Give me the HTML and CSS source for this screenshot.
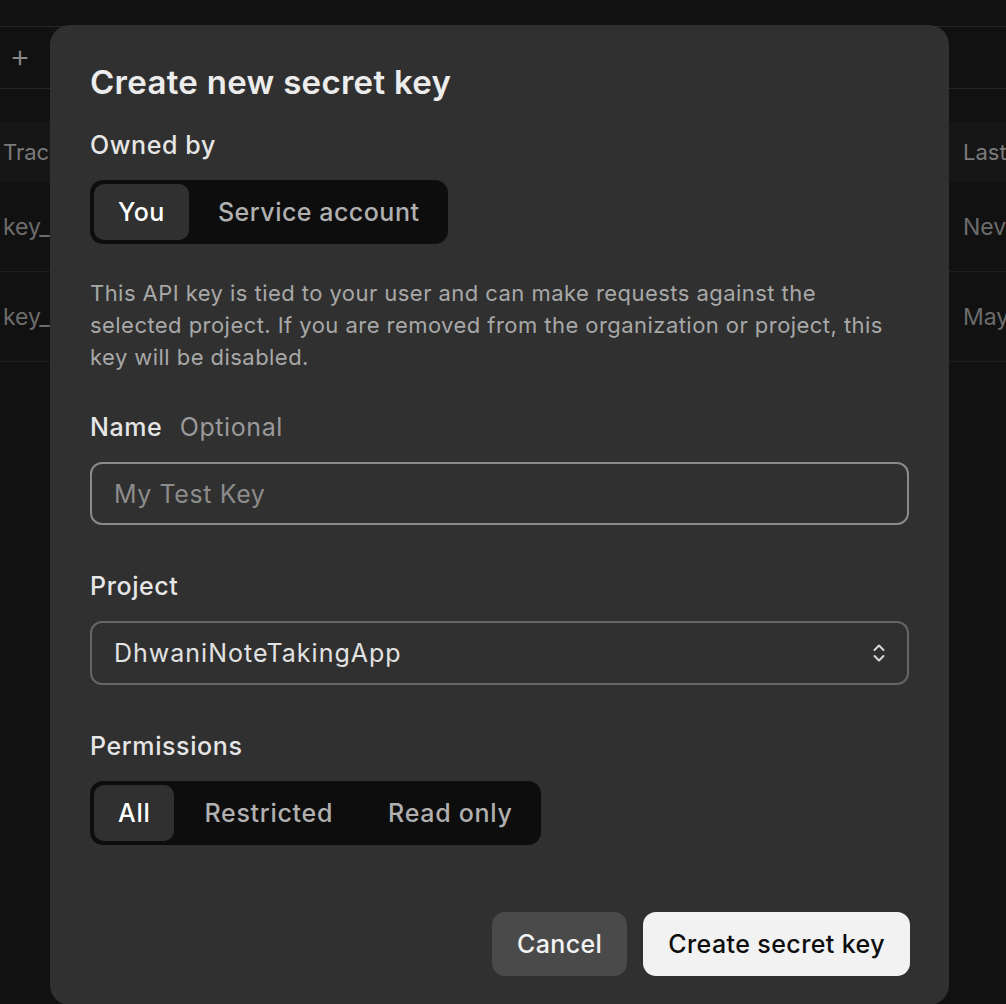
FILE: index.html
```html
<!DOCTYPE html>
<html>
<head>
<meta charset="utf-8">
<link rel="stylesheet" href="styles.css">
</head>
<body>
<div class="page">
  <div class="toolbar">
    <div class="add-btn">+</div>
  </div>
  <div class="table">
    <div class="trow thead"><span class="c1">Tracking</span><span class="c2">Last</span></div>
    <div class="trow"><span class="c1">key_abc</span><span class="c2">Nev</span></div>
    <div class="trow"><span class="c1">key_def</span><span class="c2">May</span></div>
  </div>
</div>
<div class="modal">
  <h1 class="title">Create new secret key</h1>
  <div class="label label-owned">Owned by</div>
  <div class="seg seg-owner">
    <div class="seg-item active">You</div>
    <div class="seg-item">Service account</div>
  </div>
  <p class="desc">This API key is tied to your user and can make requests against the selected project. If you are removed from the organization or project, this key will be disabled.</p>
  <div class="label label-name">Name <span class="optional">Optional</span></div>
  <div class="input placeholder">My Test Key</div>
  <div class="label label-project">Project</div>
  <div class="input select">
    <span>DhwaniNoteTakingApp</span>
    <svg class="chev" width="16" height="24" viewBox="0 0 16 24" fill="none" stroke="#d8d8d8" stroke-width="2" stroke-linecap="round" stroke-linejoin="round"><path d="M3.5 9 L8 4.5 L12.5 9"/><path d="M3.5 15 L8 19.5 L12.5 15"/></svg>
  </div>
  <div class="label label-perm">Permissions</div>
  <div class="seg seg-perm">
    <div class="seg-item active">All</div>
    <div class="seg-item">Restricted</div>
    <div class="seg-item">Read only</div>
  </div>
  <div class="actions">
    <button class="btn btn-cancel">Cancel</button>
    <button class="btn btn-primary">Create secret key</button>
  </div>
</div>
</body>
</html>
```
FILE: styles.css
```css
* { box-sizing: border-box; }
html, body { margin: 0; padding: 0; }
body {
  width: 1006px;
  height: 1004px;
  overflow: hidden;
  background: #111111;
  font-family: Inter, "Noto Sans", sans-serif;
  position: relative;
}
.page { padding-top: 26px; }
.toolbar {
  height: 63px;
  border-top: 1px solid #262626;
  border-bottom: 1px solid #262626;
  display: flex;
  align-items: center;
}
.add-btn {
  color: #8a8a8a;
  font-size: 32px;
  font-weight: 300;
  width: 40px;
  text-align: center;
  line-height: 1;
  margin-top: -4px;
}
.table { margin-top: 33px; }
.trow {
  height: 90px;
  display: flex;
  justify-content: space-between;
  align-items: center;
  border-bottom: 1px solid #1e1e1e;
  color: #6c6c6c;
  font-size: 23px;
  padding: 0 0 0 3px;
}
.trow.thead {
  height: 60px;
  background: #161616;
  border-bottom: none;
  color: #7a7a7a;
  font-size: 22px;
}
.c2 { width: 43px; white-space: nowrap; overflow: hidden; }

.modal {
  position: absolute;
  left: 50px;
  top: 25px;
  width: 899px;
  height: 980px;
  background: #303030;
  border-radius: 20px;
  padding: 34px 40px 0 40px;
  color: #ececec;
}
.title {
  margin: 0;
  font-size: 33px;
  font-weight: 600;
  line-height: 46px;
  color: #ececec;
  letter-spacing: 0.3px;
}
.label {
  font-size: 25px;
  font-weight: 500;
  line-height: 32px;
  color: #e6e6e6;
  letter-spacing: 0.6px;
}
.label-owned { margin-top: 24px; }
.seg {
  display: inline-flex;
  gap: 4px;
  background: #0d0d0d;
  border-radius: 13px;
  padding: 4px;
  height: 64px;
}
.seg-owner { margin-top: 19px; }
.seg-item {
  display: flex;
  align-items: center;
  padding: 0 25px;
  border-radius: 10px;
  font-size: 25px;
  font-weight: 500;
  color: #b0b0b0;
  letter-spacing: 0.5px;
}
.seg-owner .seg-item.active { padding: 0 24px; }
.seg-item.active {
  background: #303030;
  color: #ffffff;
}
.seg-perm .seg-item { letter-spacing: 0.7px; padding: 0 25px 0 26px; }
.seg-perm .seg-item.active { padding: 0 24px; }
.desc {
  margin: 33px 0 0 0;
  font-size: 22px;
  line-height: 32px;
  color: #a8a8a8;
  letter-spacing: 0.45px;
}
.label-name { margin-top: 38px; }
.optional { color: #9a9a9a; font-weight: 400; margin-left: 10px; }
.input {
  margin-top: 19px;
  height: 63px;
  border: 2px solid #8a8a8a;
  border-radius: 12px;
  display: flex;
  align-items: center;
  padding: 0 22px;
  font-size: 25px;
  letter-spacing: 0.6px;
}
.placeholder { color: #8c8c8c; }
.label-project { margin-top: 45px; }
.select {
  border-color: #666666;
  justify-content: space-between;
  color: #e2e2e2;
  margin-top: 19px;
  height: 64px;
  letter-spacing: 1px;
}
.chev { margin-right: -2px; }
.label-perm { margin-top: 45px; }
.seg-perm { margin-top: 19px; }
.actions {
  display: flex;
  justify-content: flex-end;
  gap: 16px;
  margin-top: 67px;
  margin-right: -1px;
}
.btn {
  height: 64px;
  border: none;
  border-radius: 13px;
  font-family: inherit;
  font-size: 25px;
  font-weight: 500;
  padding: 0 25px;
  letter-spacing: 0.4px;
}
.btn-cancel { background: #4a4a4a; color: #f4f4f4; }
.btn-primary { background: #f2f2f2; color: #0d0d0d; }
```
